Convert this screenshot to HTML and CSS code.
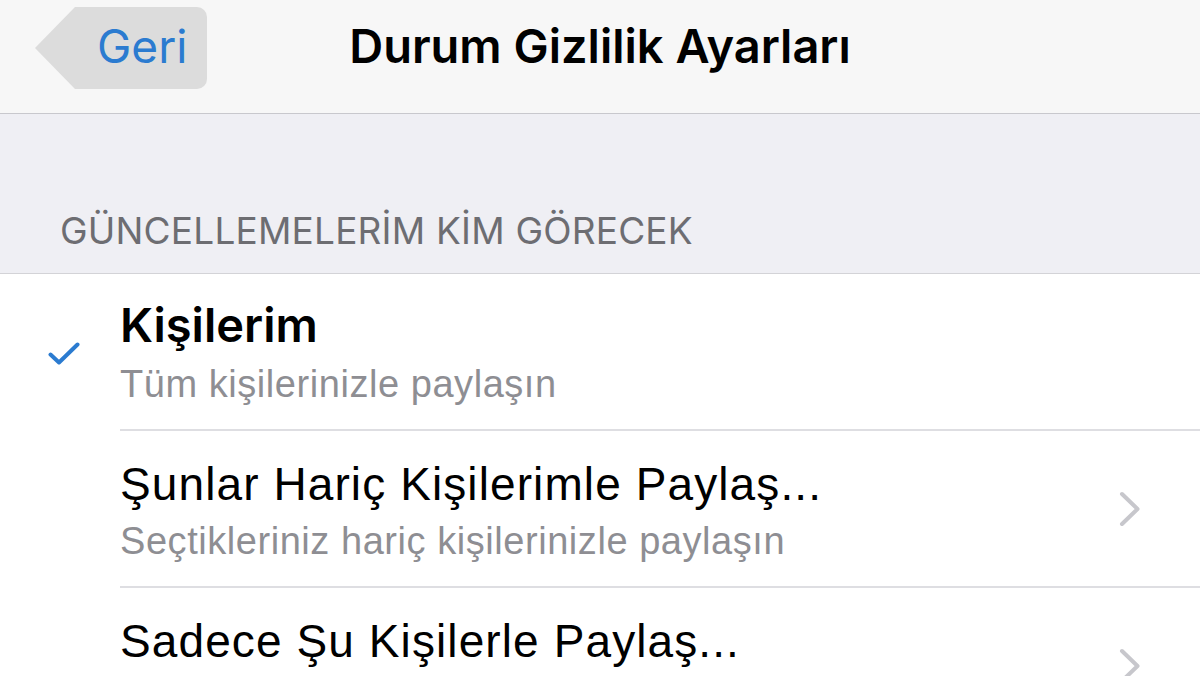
FILE: index.html
```html
<!DOCTYPE html>
<html lang="tr">
<head>
<meta charset="utf-8">
<title>Durum Gizlilik Ayarları</title>
<link rel="stylesheet" href="styles.css">
</head>
<body>
  <header class="navbar">
    <div class="nav-left">
      <a class="back" href="#">Geri</a>
    </div>
    <h1 class="nav-title">Durum Gizlilik Ayarları</h1>
    <div class="nav-right"></div>
  </header>

  <section class="group-header">
    <h2 class="group-title">GÜNCELLEMELERİM KİM GÖRECEK</h2>
  </section>

  <ul class="options">
    <li class="option selected">
      <span class="check">
        <svg viewBox="0 0 32 26" width="32" height="26"><path d="M2.5 13.5 L11 21.5 L29.5 3.5" fill="none" stroke="#2b7bd0" stroke-width="4" stroke-linecap="round" stroke-linejoin="round"/></svg>
      </span>
      <div class="option-body">
        <div class="option-text">
          <span class="option-title strong">Kişilerim</span>
          <span class="option-sub">Tüm kişilerinizle paylaşın</span>
        </div>
      </div>
    </li>
    <li class="option">
      <span class="check"></span>
      <div class="option-body">
        <div class="option-text">
          <span class="option-title">Şunlar Hariç Kişilerimle Paylaş...</span>
          <span class="option-sub">Seçtikleriniz hariç kişilerinizle paylaşın</span>
        </div>
        <svg class="chevron" viewBox="0 0 24 36" width="24" height="36"><path d="M4 3 L19.5 18 L4 33" fill="none" stroke="#c7c7cc" stroke-width="4" stroke-linecap="round" stroke-linejoin="round"/></svg>
      </div>
    </li>
    <li class="option">
      <span class="check"></span>
      <div class="option-body">
        <div class="option-text">
          <span class="option-title">Sadece Şu Kişilerle Paylaş...</span>
        </div>
        <svg class="chevron" viewBox="0 0 24 36" width="24" height="36"><path d="M4 3 L19.5 18 L4 33" fill="none" stroke="#c7c7cc" stroke-width="4" stroke-linecap="round" stroke-linejoin="round"/></svg>
      </div>
    </li>
  </ul>
</body>
</html>
```

FILE: styles.css
```css
* { box-sizing: border-box; }

html, body {
  margin: 0;
  padding: 0;
  height: 676px;
  overflow: hidden;
  background: #ffffff;
  font-family: Inter, "Liberation Sans", sans-serif;
  color: #000;
}

/* Top navigation bar */
.navbar {
  display: grid;
  grid-template-columns: 1fr auto 1fr;
  align-items: center;
  height: 114px;
  padding: 7px 0 25px;
  background: #f7f7f7;
  border-bottom: 1px solid #c8c8cd;
}

.nav-left { display: flex; }

.back {
  position: relative;
  display: flex;
  align-items: center;
  height: 82px;
  margin-left: 75px;
  padding: 0 20px 4px 22px;
  background: #dcdcdc;
  border-radius: 0 10px 10px 0;
  color: #2b7bd0;
  font-size: 46px;
  text-decoration: none;
}

/* Arrow point of the back tag */
.back::before {
  content: "";
  position: absolute;
  left: -40px;
  top: 0;
  border-top: 41px solid transparent;
  border-bottom: 41px solid transparent;
  border-right: 40px solid #dcdcdc;
}

.nav-title {
  margin: -4px 0 0;
  font-size: 47px;
  font-weight: 600;
  line-height: 56px;
}

/* Grouped table header */
.group-header {
  height: 160px;
  display: flex;
  align-items: flex-end;
  padding: 0 0 20px 60px;
  background: #efeff4;
  border-bottom: 1px solid #d3d3d7;
}

.group-title {
  margin: 0;
  font-size: 37px;
  line-height: 44px;
  font-weight: 400;
  color: #6d6d72;
  letter-spacing: 0.2px;
}

/* Option rows */
.options {
  list-style: none;
  margin: 0;
  padding: 0;
}

.option {
  display: flex;
  height: 157px;
}

.check {
  width: 120px;
  flex: none;
  padding: 67px 0 0 48px;
}

.check svg { display: block; }

.option-body {
  flex: 1;
  display: flex;
  align-items: center;
  justify-content: space-between;
  padding-right: 58px;
  border-bottom: 2px solid #dedee2;
}

.option-text {
  align-self: flex-start;
  display: flex;
  flex-direction: column;
  gap: 3px;
  padding-top: 26px;
}

.option-title {
  font-family: "Liberation Sans", Arial, sans-serif;
  font-size: 46px;
  line-height: 54px;
  letter-spacing: 1.1px;
}

.option-title.strong {
  font-family: Inter, sans-serif;
  font-weight: 600;
  font-size: 47px;
  letter-spacing: 0;
  margin-top: -2px;
  margin-bottom: 2px;
}

.option-sub {
  font-family: "Liberation Sans", Arial, sans-serif;
  font-size: 38px;
  line-height: 54px;
  letter-spacing: 0.55px;
  color: #8e8e93;
}

.chevron { flex: none; }
```
